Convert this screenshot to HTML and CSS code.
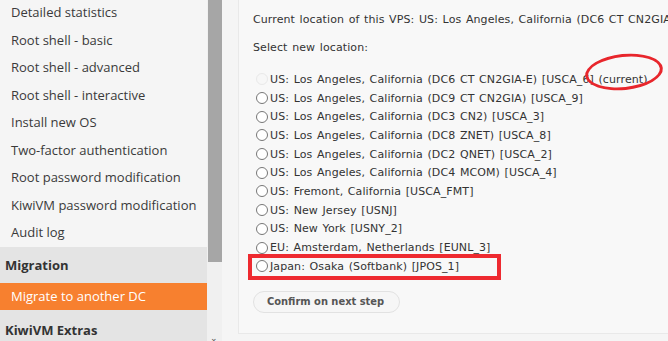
FILE: index.html
```
<!DOCTYPE html>
<html lang="en">
<head>
    <meta charset="UTF-8">
    <meta name="viewport" content="width=device-width, initial-scale=1.0">
    <title>KiwiVM - Migrate to another DC</title>
    <link rel="stylesheet" href="styles.css">
</head>
<body>
    <div class="page">
        <div class="sidebar">
            <ul class="menu">
                <li>Detailed statistics</li>
                <li>Root shell - basic</li>
                <li>Root shell - advanced</li>
                <li>Root shell - interactive</li>
                <li>Install new OS</li>
                <li>Two-factor authentication</li>
                <li>Root password modification</li>
                <li>KiwiVM password modification</li>
                <li>Audit log</li>
            </ul>
            <div class="menu-head">Migration</div>
            <div class="menu-item active">Migrate to another DC</div>
            <div class="menu-head last">KiwiVM Extras</div>
        </div>

        <div class="scrollbar">
            <div class="thumb"></div>
            <div class="arrow">&#8964;</div>
        </div>

        <div class="main">
            <div class="panel">
                <p class="current">Current location of this VPS: US: Los Angeles, California (DC6 CT CN2GIA-E) [USCA_6]</p>
                <p class="select">Select new location:</p>

                <form class="locations">
                    <label><input type="radio" name="loc" disabled>US: Los Angeles, California (DC6 CT CN2GIA-E) [USCA_6] (current)</label>
                    <label><input type="radio" name="loc">US: Los Angeles, California (DC9 CT CN2GIA) [USCA_9]</label>
                    <label><input type="radio" name="loc">US: Los Angeles, California (DC3 CN2) [USCA_3]</label>
                    <label><input type="radio" name="loc">US: Los Angeles, California (DC8 ZNET) [USCA_8]</label>
                    <label><input type="radio" name="loc">US: Los Angeles, California (DC2 QNET) [USCA_2]</label>
                    <label><input type="radio" name="loc">US: Los Angeles, California (DC4 MCOM) [USCA_4]</label>
                    <label><input type="radio" name="loc">US: Fremont, California [USCA_FMT]</label>
                    <label><input type="radio" name="loc">US: New Jersey [USNJ]</label>
                    <label><input type="radio" name="loc">US: New York [USNY_2]</label>
                    <label><input type="radio" name="loc">EU: Amsterdam, Netherlands [EUNL_3]</label>
                    <label><input type="radio" name="loc">Japan: Osaka (Softbank) [JPOS_1]</label>
                </form>

                <button class="confirm">Confirm on next step</button>

                <!-- red marks drawn over the screenshot -->
                <div class="mark-ellipse"></div>
                <div class="mark-box"></div>
            </div>
        </div>
    </div>
</body>
</html>
```

FILE: styles.css
```
body {
    margin: 0;
    padding: 0;
    background-color: #f3f3f3;
    overflow: hidden;
}

.page {
    display: flex;
    height: 341px;
}

.sidebar {
    width: 207px;
    flex-shrink: 0;
    background-color: #f5f5f5;
    font-family: "Open Sans", sans-serif;
    font-size: 13px;
    color: #3a3a3a;
}

.menu {
    list-style: none;
    margin: -1px 0 0 0;
    padding: 0;
}

.menu li {
    height: 27.5px;
    line-height: 27.5px;
    padding-left: 11px;
    white-space: nowrap;
}

.menu-head {
    background-color: #e4e4e4;
    font-weight: bold;
    height: 36px;
    line-height: 37px;
    padding-left: 5px;
    color: #333;
}

.menu-head.last {
    height: 40px;
    line-height: 40px;
}

.menu-item.active {
    background-color: #f7802f;
    color: #fff;
    height: 27px;
    line-height: 27px;
    padding-left: 11px;
}

.scrollbar {
    width: 15px;
    flex-shrink: 0;
    background-color: #f0f0f0;
    position: relative;
}

.thumb {
    margin-left: 1px;
    width: 14px;
    height: 262px;
    background-color: #a6a6a6;
}

.arrow {
    position: absolute;
    bottom: -2px;
    left: 3px;
    font-size: 9px;
    line-height: 9px;
    color: #555;
    font-family: "DejaVu Sans", sans-serif;
}

.main {
    flex: 1;
    padding-left: 16px;
    background-color: #f5f5f5;
}

.panel {
    position: relative;
    height: 334px;
    margin-top: -1px;
    background-color: #f8f8f8;
    border-left: 1px solid #e9e9e9;
    border-bottom: 1px solid #e9e9e9;
    padding-left: 14px;
    font-family: "DejaVu Sans", Verdana, sans-serif;
    font-size: 11px;
    letter-spacing: 0.1px;
    word-spacing: 1px;
    color: #333;
    white-space: nowrap;
    overflow: hidden;
}

.current {
    margin: 14px 0 0 0;
}

.select {
    margin: 15px 0 0 0;
}

.locations {
    margin-top: 16px;
}

.locations label {
    display: flex;
    align-items: center;
    height: 18.7px;
}

.locations input {
    margin: 0 2px 0 3px;
    width: 12px;
    height: 12px;
}

.locations input:disabled {
    opacity: 0.35;
}

.confirm {
    margin-top: 15px;
    font-family: "DejaVu Sans Condensed", "DejaVu Sans", sans-serif;
    font-size: 11px;
    font-weight: bold;
    letter-spacing: 0;
    word-spacing: 0;
    color: #555;
    background-color: #f6f6f6;
    border: 1px solid #e2e2e2;
    border-radius: 11px;
    padding: 3px 15px 3px 13px;
    height: 22px;
}

.mark-ellipse {
    position: absolute;
    left: 346px;
    top: 55px;
    width: 72px;
    height: 30px;
    border: 3px solid #e8262c;
    border-radius: 50%;
    transform: rotate(-6deg);
}

.mark-box {
    position: absolute;
    left: 9px;
    top: 255px;
    width: 245px;
    height: 18px;
    border: 4px solid #ee2a30;
}
```
